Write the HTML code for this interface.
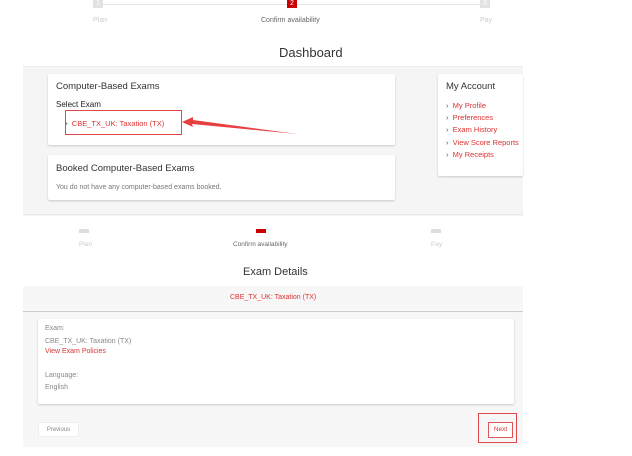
<!DOCTYPE html>
<html><head><style>
body{margin:0;width:632px;height:456px;background:#fff;font-family:"Liberation Sans",sans-serif;position:relative;overflow:hidden;color:#333}
.a{position:absolute}
.card{position:absolute;background:#fff;box-shadow:0 1px 2px rgba(0,0,0,.18);border-radius:2px}
.red{color:#d33}
.g{color:#ccc}
</style></head><body>
<div class="a" style="left:98px;top:4px;width:387px;height:1px;background:#e6e6e6"></div>
<div class="a" style="left:93px;top:0;width:10px;height:8px;background:#e2e2e2;color:#fff;font-size:7px;text-align:center">1</div>
<div class="a" style="left:287px;top:0;width:10px;height:8px;background:#c00;color:#fff;font-size:7px;text-align:center">2</div>
<div class="a" style="left:480px;top:0;width:10px;height:8px;background:#e2e2e2;color:#fff;font-size:7px;text-align:center">3</div>
<div class="a g" style="left:93px;top:17px;font-size:7px">Plan</div>
<div class="a" style="left:261px;top:17px;font-size:7px;color:#666">Confirm availability</div>
<div class="a g" style="left:480px;top:17px;font-size:7px">Pay</div>
<div class="a" style="left:279px;top:45px;font-size:13px;color:#333">Dashboard</div>
<div class="a" style="left:23px;top:66px;width:500px;height:149px;background:#f5f5f5;border-top:1px solid #eee"></div>
<div class="card" style="left:48px;top:74px;width:347px;height:71px">
 <div class="a" style="left:8px;top:7px;font-size:9.5px">Computer-Based Exams</div>
 <div class="a" style="left:8px;top:26px;font-size:8px;color:#222">Select Exam</div>
 <div class="a red" style="left:17px;top:45px;font-size:7.5px"><span style="color:#777">•</span>&nbsp; CBE_TX_UK: Taxation (TX)</div>
</div>
<div class="card" style="left:48px;top:155px;width:347px;height:45px">
 <div class="a" style="left:8px;top:8px;font-size:9.5px">Booked Computer-Based Exams</div>
 <div class="a" style="left:8px;top:29px;font-size:7px;color:#777">You do not have any computer-based exams booked.</div>
</div>
<div class="card" style="left:438px;top:74px;width:85px;height:102px;overflow:hidden">
 <div class="a" style="left:8px;top:7px;font-size:9.5px">My Account</div>
 <div class="a red" style="left:8px;top:26px;font-size:7.5px;line-height:12.2px;white-space:nowrap"><span style="color:#555">›</span>&nbsp; My Profile<br><span style="color:#555">›</span>&nbsp; Preferences<br><span style="color:#555">›</span>&nbsp; Exam History<br><span style="color:#555">›</span>&nbsp; View Score Reports<br><span style="color:#555">›</span>&nbsp; My Receipts</div>
</div>
<div class="a" style="left:65px;top:110px;width:115px;height:23px;border:1.5px solid #e04848"></div>
<svg class="a" style="left:0;top:0" width="632" height="456">
<polygon points="182,122 193,117 193,120 297,134 192,124 193,127" fill="#e84040"/>
<polygon points="428,421 470,423 470,419 480,424 470,428 470,425" fill="#e84040"/>
</svg>
<div class="a" style="left:23px;top:214px;width:500px;height:1px;background:#e8e8e8"></div>
<div class="a" style="left:79px;top:229px;width:10px;height:4px;background:#ddd"></div>
<div class="a" style="left:256px;top:229px;width:10px;height:4px;background:#c00"></div>
<div class="a" style="left:431px;top:229px;width:10px;height:4px;background:#ddd"></div>
<div class="a g" style="left:79px;top:241px;font-size:6.5px">Plan</div>
<div class="a" style="left:233px;top:241px;font-size:6.5px;color:#666">Confirm availability</div>
<div class="a g" style="left:431px;top:241px;font-size:6.5px">Pay</div>
<div class="a" style="left:243px;top:266px;font-size:11px">Exam Details</div>
<div class="a" style="left:23px;top:286px;width:500px;height:161px;background:#f7f7f7"></div>
<div class="a" style="left:23px;top:311px;width:500px;height:1px;background:#ccc"></div>
<div class="a red" style="left:230px;top:294px;font-size:7px">CBE_TX_UK: Taxation (TX)</div>
<div class="card" style="left:38px;top:319px;width:476px;height:85px;font-size:7px;color:#888">
 <div class="a" style="left:7px;top:6px">Exam:</div>
 <div class="a" style="left:7px;top:19px">CBE_TX_UK: Taxation (TX)</div>
 <div class="a red" style="left:7px;top:29px">View Exam Policies</div>
 <div class="a" style="left:7px;top:53px">Language:</div>
 <div class="a" style="left:7px;top:65px">English</div>
</div>
<div class="a" style="left:38px;top:422px;width:41px;height:15px;background:#fff;border:1px solid #eee;font-size:6px;color:#888;text-align:center;line-height:15px;box-sizing:border-box">Previous</div>
<div class="a" style="left:478px;top:413px;width:39px;height:30px;border:1.5px solid #e04848;box-sizing:border-box"></div>
<div class="a" style="left:488px;top:422px;width:25px;height:16px;background:#fff;border:1px solid #d55;font-size:6.5px;color:#d33;text-align:center;line-height:14px;box-sizing:border-box">Next</div>
</body></html>
